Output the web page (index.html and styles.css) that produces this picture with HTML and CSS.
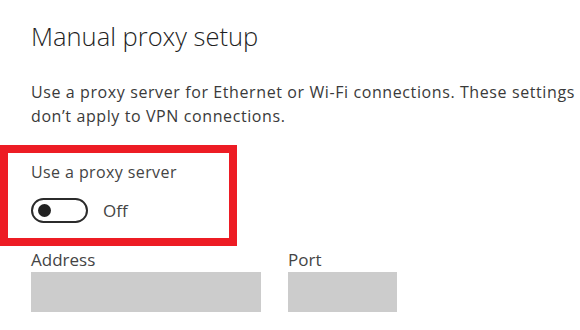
FILE: index.html
```html
<!DOCTYPE html>
<html lang="en">

<head>
  <meta charset="UTF-8" />
  <meta name="viewport" content="width=device-width, initial-scale=1.0" />
  <link rel="stylesheet" href="styles.css">
  <title>Proxy</title>
</head>

<body>
  <h1 class="heading">Manual proxy setup</h1>

  <p class="desc">Use a proxy server for Ethernet or Wi-Fi connections. These settings don’t apply to VPN connections.</p>

  <div class="highlight">
    <div class="label">Use a proxy server</div>
    <div class="switch-row">
      <span class="switch"><span class="knob"></span></span>
      <span class="state">Off</span>
    </div>
  </div>

  <div class="fields">
    <div class="field">
      <div class="field-label">Address</div>
      <div class="input address"></div>
    </div>
    <div class="field">
      <div class="field-label">Port</div>
      <div class="input port"></div>
    </div>
  </div>
</body>

</html>
```

FILE: styles.css
```css
* {
  box-sizing: border-box;
  padding: 0;
  margin: 0;
}

body {
  background-color: #fff;
  font-family: "Open Sans", sans-serif;
  color: #333;
  padding: 19px 0 0 31px;
  overflow: hidden;
}

.heading {
  font-size: 25.5px;
  font-weight: 300;
  line-height: 34px;
  color: #1f1f1f;
}

.desc {
  margin-top: 27px;
  font-size: 16px;
  letter-spacing: 0.6px;
  line-height: 24px;
  width: 549px;
  color: #3a3a3a;
}

.highlight {
  margin: 17px 0 0 -31px;
  width: 237px;
  border: 8px solid #ed1c24;
  padding: 9px 0 15px 23px;
}

.label {
  font-size: 16px;
  letter-spacing: 0.4px;
  line-height: 20px;
  color: #444;
}

.switch-row {
  margin-top: 16px;
  display: flex;
  align-items: center;
  gap: 15px;
}

.switch {
  width: 57px;
  height: 25px;
  border: 2px solid #2b2b2b;
  border-radius: 13px;
  display: flex;
  align-items: center;
  padding-left: 5px;
}

.knob {
  width: 13px;
  height: 13px;
  border-radius: 50%;
  background-color: #222;
}

.state {
  font-size: 17px;
  line-height: 22px;
  color: #444;
}

.fields {
  margin-top: 3px;
  display: flex;
  gap: 27px;
}

.field-label {
  font-size: 17px;
  line-height: 22px;
  color: #444;
}

.input {
  margin-top: 1px;
  height: 40px;
  background-color: #cccccc;
}

.address {
  width: 230px;
}

.port {
  width: 109px;
}
```
